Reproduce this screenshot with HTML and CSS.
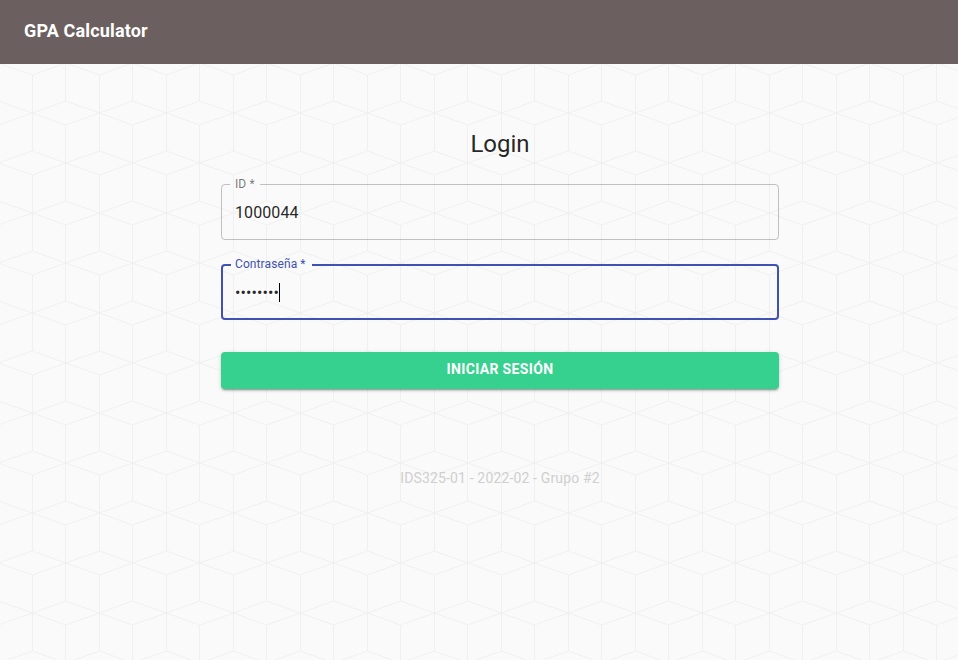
FILE: index.html
```html
<!DOCTYPE html>
<html lang="es">
<head>
<meta charset="utf-8">
<title>GPA Calculator</title>
<link rel="stylesheet" href="styles.css">
</head>
<body>
<svg class="backdrop" aria-hidden="true">
  <defs>
    <pattern id="cubes" x="32" y="81" width="67" height="100" patternUnits="userSpaceOnUse">
      <path class="cube-line" d="M.5 0V70M.5 94V100M33.5 0V20M33.5 44V100M33.5 20L67.5 32M33.5 20L.5 32L33.5 44L67.5 32M.5 70L33.5 82L.5 94M67.5 70L33.5 82L67.5 94"/>
    </pattern>
  </defs>
  <rect width="100%" height="100%" fill="url(#cubes)"/>
</svg>
<header class="app-bar"><h1 class="brand">GPA Calculator</h1></header>
<main class="content">
  <h2 class="title">Login</h2>
  <form class="form">
    <fieldset class="field">
      <legend class="label">ID *</legend>
      <div class="value">1000044</div>
    </fieldset>
    <fieldset class="field focused">
      <legend class="label">Contraseña *</legend>
      <div class="value">••••••••<span class="caret"></span></div>
    </fieldset>
    <button class="submit" type="button">Iniciar sesión</button>
  </form>
  <p class="credits">IDS325-01 - 2022-02 - Grupo #2</p>
</main>
</body>
</html>
```
FILE: styles.css
```css
* { box-sizing: border-box; }
body {
  margin: 0;
  height: 100vh;
  overflow: hidden;
  background: #fafafa;
  color: rgba(0, 0, 0, 0.87);
  font-family: Roboto, sans-serif;
}
.backdrop {
  position: absolute;
  inset: 0;
  z-index: -1;
  width: 100%;
  height: 100%;
}
.cube-line { fill: none; stroke: #f0f0f0; stroke-width: 1; }
.app-bar {
  height: 64px;
  padding: 16px 24px;
  background: #6c5f5f;
  color: #fff;
}
.brand {
  margin: 0;
  font-size: 18px;
  font-weight: 700;
  line-height: 29px;
  letter-spacing: 0.15px;
}
.content {
  width: 558px;
  margin: 64px 0 0 221px;
}
.title {
  margin: 0;
  font-size: 24px;
  font-weight: 400;
  line-height: 32px;
  text-align: center;
}
.form {
  display: flex;
  flex-direction: column;
  margin-top: 17px;
}
.field {
  height: 63px;
  margin: 0 0 17px;
  padding: 0 8px;
  border: 1px solid rgba(0, 0, 0, 0.23);
  border-radius: 4px;
  min-width: 0;
}
.label {
  height: 14px;
  padding: 0 5px;
  color: rgba(0, 0, 0, 0.54);
  font-size: 12px;
  line-height: 14px;
  letter-spacing: 0.1px;
}
.value {
  display: flex;
  align-items: center;
  height: 19px;
  margin: 12px 5px 0;
  font-size: 16px;
  line-height: 19px;
  letter-spacing: 0.1px;
}
.focused {
  padding: 0 8px;
  border: 2px solid #3f51b5;
}
.focused .label {
  height: 16px;
  padding: 0 6px 0 4px;
  color: #3f51b5;
}
.focused .value { margin: 10px 4px 0; }
.caret { width: 1px; height: 19px; background: #000; }
.submit {
  height: 37px;
  margin-top: 15px;
  padding: 0 16px 3px;
  border: 0;
  border-radius: 4px;
  background: #36d08f;
  box-shadow: 0 3px 1px -2px rgba(0, 0, 0, 0.2), 0 2px 2px 0 rgba(0, 0, 0, 0.14), 0 1px 5px 0 rgba(0, 0, 0, 0.12);
  color: #fff;
  font: 700 14px/24px Roboto, sans-serif;
  letter-spacing: 0.35px;
  text-transform: uppercase;
}
.credits {
  margin: 79px 0 0;
  color: #cfcfcf;
  font-size: 14px;
  line-height: 20px;
  text-align: center;
  letter-spacing: 0.15px;
}
```
